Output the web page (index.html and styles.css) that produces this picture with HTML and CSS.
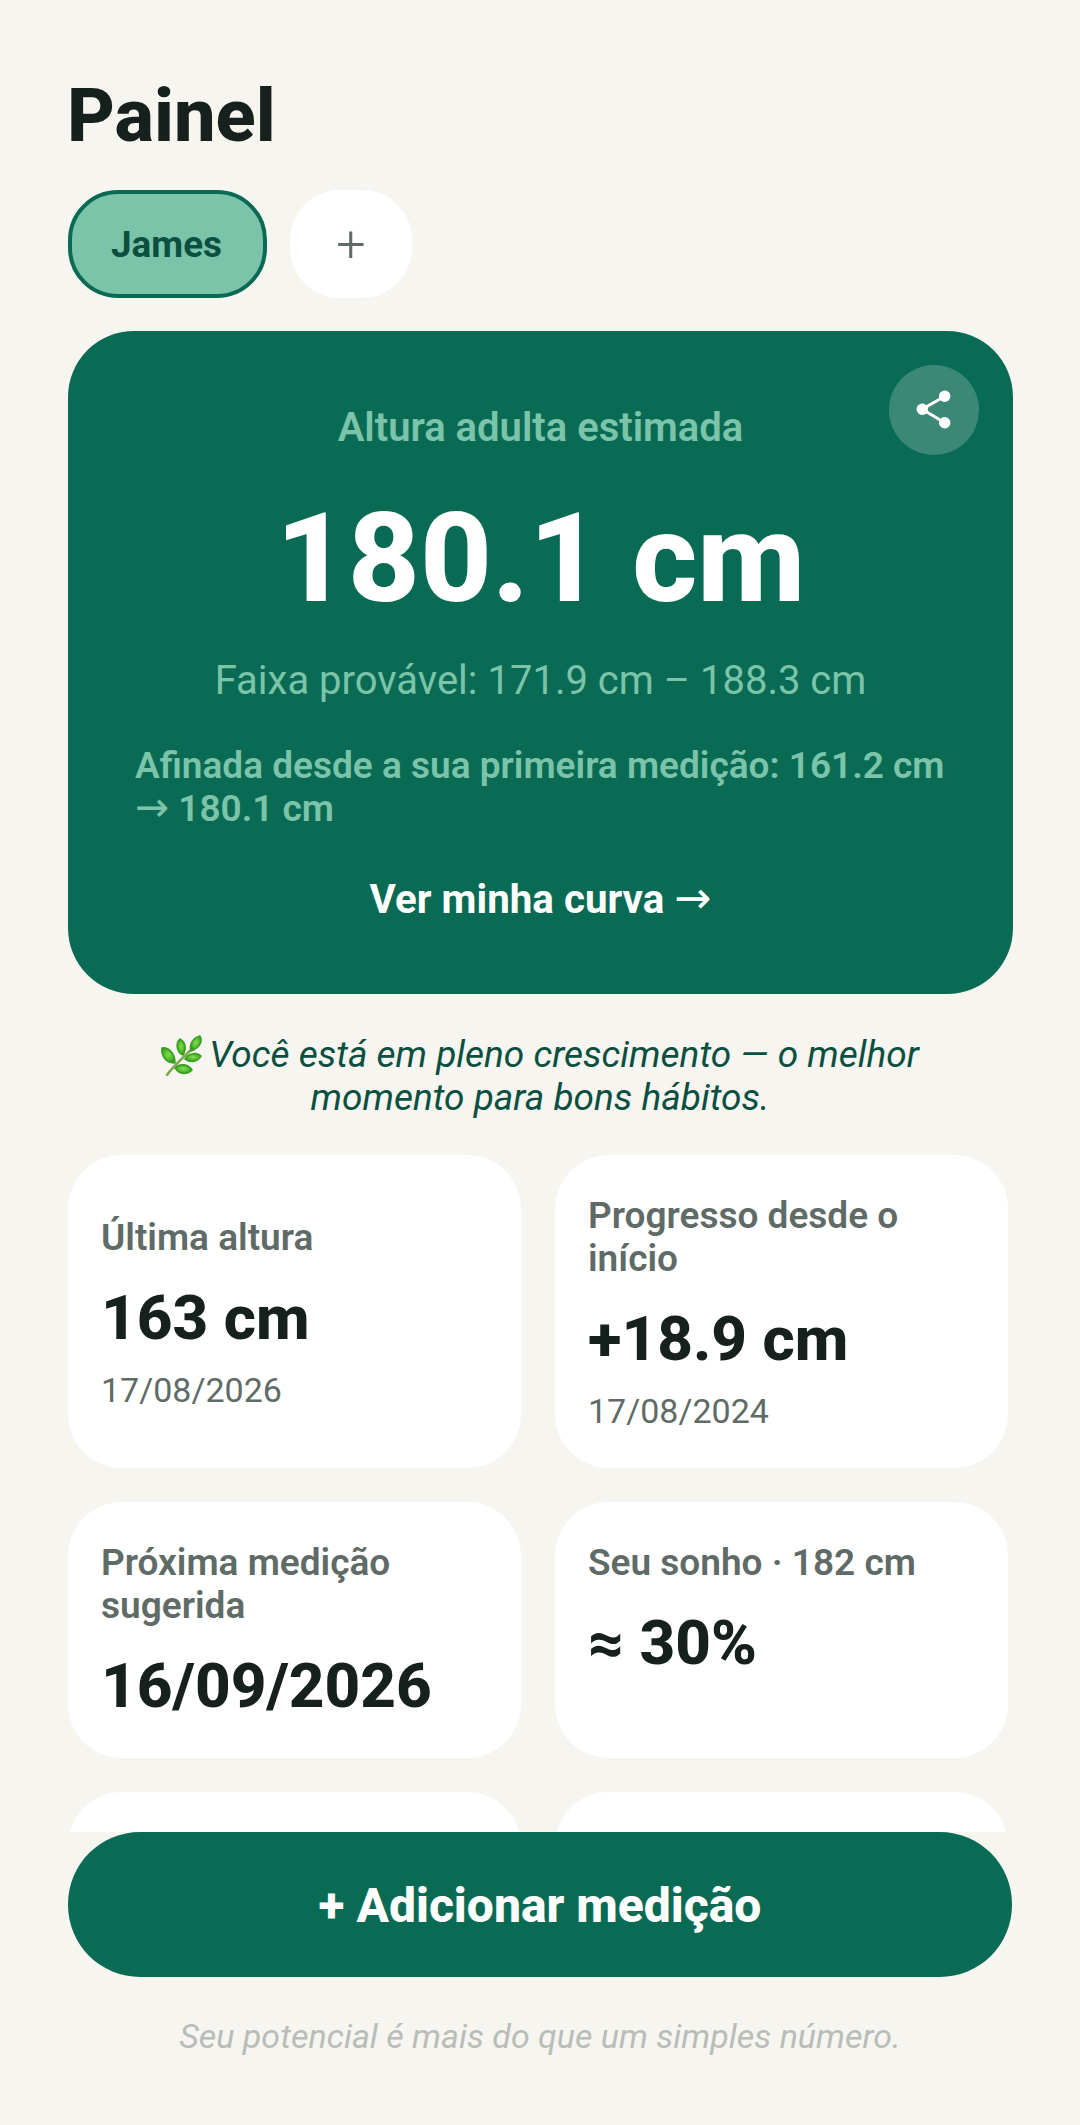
FILE: index.html
```html
<!DOCTYPE html>
<html lang="pt-BR">
<head>
<meta charset="utf-8">
<title>Painel</title>
<link rel="stylesheet" href="styles.css">
</head>
<body>
<div class="app">
  <main class="scroll">
    <h1 class="title">Painel</h1>
    <div class="tabs">
      <button class="tab tab-active">James</button>
      <button class="tab tab-add">+</button>
    </div>
    <section class="hero">
      <button class="share" aria-label="Compartilhar">
        <svg width="44" height="44" viewBox="0 0 44 44"><path d="M32.7 8.3 10.3 21.3 32.7 34.7" fill="none" stroke="#fff" stroke-width="3"/><circle cx="32.7" cy="8.3" r="5.7" fill="#fff"/><circle cx="10.3" cy="21.3" r="5.7" fill="#fff"/><circle cx="32.7" cy="34.7" r="5.7" fill="#fff"/></svg>
      </button>
      <p class="hero-label">Altura adulta estimada</p>
      <p class="hero-value">180.1 cm</p>
      <p class="hero-range">Faixa provável: 171.9 cm – 188.3 cm</p>
      <p class="hero-note">Afinada desde a sua primeira medição: 161.2 cm <span class="arrow">→</span> 180.1 cm</p>
      <p class="hero-link">Ver minha curva <span class="arrow">→</span></p>
    </section>
    <p class="message"><svg class="herb" width="42" height="42" viewBox="0 0 42 42"><defs><radialGradient id="leaf" cx="50%" cy="45%" r="60%"><stop offset="0" stop-color="#86dc4e"/><stop offset=".6" stop-color="#4fb82c"/><stop offset="1" stop-color="#2a8f1a"/></radialGradient></defs><path d="M6 41C12 32 24 22 34 12" fill="none" stroke="#7fa84c" stroke-width="2.6" stroke-linecap="round"/><g stroke="#3a9f22" stroke-width="1.6" stroke-linejoin="round"><path d="M1 14C7 13 14 19 14 29 6 29 0 23 1 14Z" fill="url(#leaf)"/><path d="M19 5C24 8 26 14 22 21 16 18 14 10 19 5Z" fill="url(#leaf)"/><path d="M39 2C42 8 38 14 30 17 28 10 32 4 39 2Z" fill="url(#leaf)"/><path d="M40 22C37 28 30 29 24 25 28 19 36 18 40 22Z" fill="url(#leaf)"/><path d="M31 36C26 41 19 41 14 34 19 29 27 30 31 36Z" fill="url(#leaf)"/></g></svg> Você está em pleno crescimento — o melhor momento para bons hábitos.</p>
    <div class="grid">
      <article class="card">
        <h2 class="card-label">Última altura</h2>
        <p class="card-value">163 cm</p>
        <p class="card-sub">17/08/2026</p>
      </article>
      <article class="card">
        <h2 class="card-label">Progresso desde o início</h2>
        <p class="card-value">+18.9 cm</p>
        <p class="card-sub">17/08/2024</p>
      </article>
      <article class="card card-top">
        <h2 class="card-label">Próxima medição sugerida</h2>
        <p class="card-value">16/09/2026</p>
      </article>
      <article class="card card-top">
        <h2 class="card-label">Seu sonho · 182 cm</h2>
        <p class="card-value">≈ 30%</p>
      </article>
      <article class="card card-empty"></article>
      <article class="card card-empty"></article>
    </div>
  </main>
  <footer class="bottom">
    <button class="add">+ Adicionar medição</button>
    <p class="tagline">Seu potencial é mais do que um simples número.</p>
  </footer>
</div>
</body>
</html>
```
FILE: styles.css
```css
* { box-sizing: border-box; }
html, body { margin: 0; height: 100%; }
body { background: #f6f5f0; font-family: Roboto, "Noto Sans", sans-serif; color: #16211d; }
p, h1, h2 { margin: 0; }
button { font-family: inherit; border: 0; padding: 0; }
.app { height: 2125px; display: flex; flex-direction: column; }
.scroll { flex: 1; min-height: 0; overflow: hidden; padding: 71px 68px 0; }
.title { font-size: 74px; line-height: 90px; font-weight: 800; margin-left: -1px; }
.tabs { display: flex; gap: 23px; margin-top: 29px; }
.tab { height: 108px; border-radius: 50px; }
.tab-active { width: 199px; padding-right: 2px; background: #7bc4aa; border: 4px solid #0a6b55; color: #0a4f3f; font-size: 36.8px; font-weight: 700; }
.tab-add { width: 122px; background: #fff; color: #5f6b66; font-size: 52px; font-weight: 300; }
.hero { position: relative; margin-top: 33px; height: 663px; width: 945px; padding: 73px 67px 0; background: #0a6b55; border-radius: 66px; text-align: center; }
.share { position: absolute; top: 34px; right: 34px; width: 90px; height: 90px; border-radius: 50%; background: rgba(255,255,255,.2); display: flex; align-items: center; justify-content: center; }
.hero-label { font-size: 40px; line-height: 48px; font-weight: 600; color: #7bc4aa; }
.hero-value { font-size: 125px; line-height: 148px; font-weight: 800; color: #fff; margin-top: 33px; }
.hero-range { font-size: 40px; line-height: 48px; color: #7bc4aa; margin-top: 24px; }
.hero-note { font-size: 37px; line-height: 42.5px; font-weight: 600; color: #7bc4aa; margin-top: 40px; text-align: left; }
.hero-link { font-size: 40.3px; line-height: 48px; font-weight: 700; color: #fff; margin-top: 46px; }
.arrow { font-family: "DejaVu Sans", sans-serif; font-size: 1.1em; font-weight: 400; line-height: 0; }
.message { width: 800px; margin: 39px auto 0; font-size: 37px; line-height: 43px; font-style: italic; color: #0a4f3f; text-align: center; }
.herb { vertical-align: -9px; margin-right: -3px; }
.grid { display: grid; grid-template-columns: 453px 453px; gap: 34px; margin-top: 36px; }
.card { background: #fff; border-radius: 54px; padding: 39px 33px 35px; display: flex; flex-direction: column; justify-content: center; }
.card-top { justify-content: flex-start; }
.card-empty { height: 200px; }
.card-label { font-size: 37px; line-height: 43px; font-weight: 600; color: #5f6b66; }
.card-value { font-size: 62px; line-height: 74px; font-weight: 800; color: #16211d; margin-top: 22px; }
.card-sub { font-size: 34px; line-height: 42px; color: #5f6b66; margin: 14px 0 1px; }
.bottom { padding: 0 68px; height: 293px; }
.add { display: block; width: 944px; height: 145px; padding-top: 2px; border-radius: 72px; background: #0a6b55; color: #fff; font-size: 48px; font-weight: 800; }
.tagline { margin-top: 39px; font-size: 34px; line-height: 40px; font-style: italic; color: #b9bdb8; text-align: center; }
```
